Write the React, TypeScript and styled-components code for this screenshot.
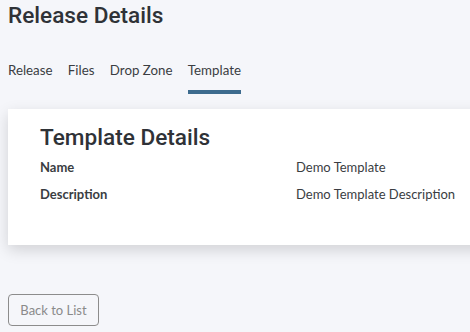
import React from 'react';
import styled, { createGlobalStyle } from 'styled-components';

const GlobalStyle = createGlobalStyle`
  html, body {
    margin: 0;
    padding: 0;
    background: #f5f6fa;
    overflow: hidden;
  }
  body {
    font-family: Lato, "Liberation Sans", sans-serif;
    color: #333;
  }
`;

const Page = styled.div`
  width: 470px;
  height: 332px;
  padding: 0 0 0 8px;
  box-sizing: border-box;
  display: flex;
  flex-direction: column;
`;

const Title = styled.h1`
  margin: 0;
  padding-top: 3px;
  font-family: Roboto, "Liberation Sans", sans-serif;
  font-weight: 500;
  font-size: 22.6px;
  line-height: 26px;
  color: #2f3237;
`;

const Tabs = styled.nav`
  display: flex;
  gap: 15.4px;
  margin-top: 33px;
`;

const Tab = styled.div<{ $active?: boolean }>`
  font-size: 13.3px;
  line-height: 16px;
  color: #3a3d42;
  padding-bottom: 12px;
  border-bottom: 4px solid ${({ $active }) => ($active ? '#3d6b8e' : 'transparent')};
`;

const Card = styled.section`
  margin-top: 15px;
  background: #fff;
  height: 136px;
  margin-right: -20px;
  padding: 15px 32px;
  box-sizing: border-box;
  box-shadow: 0 5px 14px rgba(0, 0, 0, 0.15);
`;

const CardTitle = styled.h2`
  margin: 0 0 2px;
  font-family: Roboto, "Liberation Sans", sans-serif;
  font-weight: 500;
  font-size: 22.6px;
  line-height: 28px;
  color: #2f3237;
`;

const Row = styled.div`
  display: grid;
  grid-template-columns: 256px 1fr;
  font-size: 13px;
  line-height: 27px;
`;

const Label = styled.div`
  font-weight: 700;
  color: #3a3d42;
`;

const Value = styled.div`
  color: #3a3d42;
`;

const Footer = styled.div`
  margin-top: 49px;
`;

const BackButton = styled.button`
  width: 91px;
  height: 32px;
  background: transparent;
  border: 1px solid #8c8c8c;
  border-radius: 4px;
  font-family: Lato, "Liberation Sans", sans-serif;
  font-size: 13px;
  color: #8a8a8a;
  cursor: pointer;
`;

export default function App() {
  return (
    <>
      <GlobalStyle />
      <Page>
        <Title>Release Details</Title>
        <Tabs>
          <Tab>Release</Tab>
          <Tab>Files</Tab>
          <Tab>Drop Zone</Tab>
          <Tab $active>Template</Tab>
        </Tabs>
        <Card>
          <CardTitle>Template Details</CardTitle>
          <Row>
            <Label>Name</Label>
            <Value>Demo Template</Value>
          </Row>
          <Row>
            <Label>Description</Label>
            <Value>Demo Template Description</Value>
          </Row>
        </Card>
        <Footer>
          <BackButton>Back to List</BackButton>
        </Footer>
      </Page>
    </>
  );
}
